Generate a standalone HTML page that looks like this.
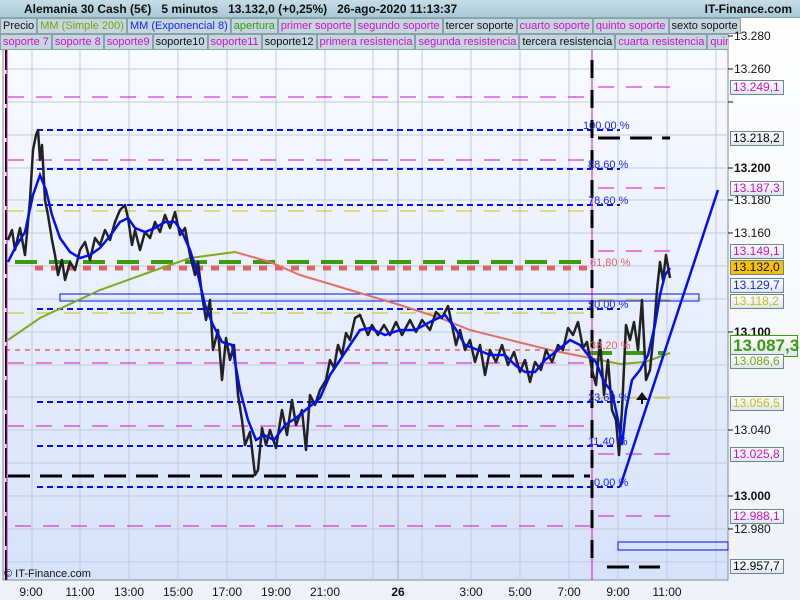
<!DOCTYPE html>
<html><head><meta charset="utf-8"><style>
*{margin:0;padding:0;box-sizing:border-box}
body{width:800px;height:600px;overflow:hidden;background:#fff;font-family:"Liberation Sans",sans-serif;position:relative}
#top{position:absolute;left:0;top:0;width:800px;height:18px;background:linear-gradient(#c6dde8,#a9c8d6);border-bottom:1px solid #8aa;font-size:12px;font-weight:bold;color:#111}
#top span{position:absolute;top:2px}
.row{position:absolute;left:0;height:16px;display:flex;font-size:11px;white-space:nowrap}
.row div{background:#c4d6de;border:1px solid #8aa0aa;padding:0 2px;line-height:14px;margin-right:0}
.m{color:#d010c8}.k{color:#111}
.ax{position:absolute;font-size:12px;color:#111;left:734px}
.bx{position:absolute;left:730px;width:54px;height:15px;border:1px solid #6d8694;background:linear-gradient(#fff,#dde6f0);font-size:12px;line-height:13px;padding-left:2px}
.tl{position:absolute;top:585px;font-size:12px;color:#111;width:40px;text-align:center}
</style></head><body>
<svg width="800" height="600" style="position:absolute;left:0;top:0">
<defs><linearGradient id="bg" x1="0" y1="0" x2="0" y2="1"><stop offset="0" stop-color="#fbfcff"/><stop offset="1" stop-color="#d6e2fb"/></linearGradient>
<linearGradient id="ab" x1="0" y1="0" x2="0" y2="1"><stop offset="0" stop-color="#fff"/><stop offset="1" stop-color="#eef2f8"/></linearGradient></defs>
<rect x="0" y="0" width="800" height="600" fill="url(#ab)"/>
<rect x="3" y="18" width="725" height="562" fill="url(#bg)" stroke="#888"/>
<g stroke="#c3cad8" stroke-width="1">
<line x1="3" x2="728" y1="36" y2="36"/><line x1="3" x2="728" y1="69" y2="69"/><line x1="3" x2="728" y1="102" y2="102"/><line x1="3" x2="728" y1="135" y2="135"/><line x1="3" x2="728" y1="168" y2="168"/><line x1="3" x2="728" y1="200" y2="200"/><line x1="3" x2="728" y1="233" y2="233"/><line x1="3" x2="728" y1="266" y2="266"/><line x1="3" x2="728" y1="299" y2="299"/><line x1="3" x2="728" y1="332" y2="332"/><line x1="3" x2="728" y1="365" y2="365"/><line x1="3" x2="728" y1="397" y2="397"/><line x1="3" x2="728" y1="430" y2="430"/><line x1="3" x2="728" y1="463" y2="463"/><line x1="3" x2="728" y1="496" y2="496"/><line x1="3" x2="728" y1="529" y2="529"/><line x1="3" x2="728" y1="562" y2="562"/>
<line x1="32" x2="32" y1="18" y2="580"/><line x1="80" x2="80" y1="18" y2="580"/><line x1="129" x2="129" y1="18" y2="580"/><line x1="178" x2="178" y1="18" y2="580"/><line x1="227" x2="227" y1="18" y2="580"/><line x1="276" x2="276" y1="18" y2="580"/><line x1="325" x2="325" y1="18" y2="580"/><line x1="373" x2="373" y1="18" y2="580"/><line x1="398" x2="398" y1="18" y2="580" stroke="#aab"/><line x1="422" x2="422" y1="18" y2="580"/><line x1="471" x2="471" y1="18" y2="580"/><line x1="520" x2="520" y1="18" y2="580"/><line x1="569" x2="569" y1="18" y2="580"/><line x1="618" x2="618" y1="18" y2="580"/><line x1="667" x2="667" y1="18" y2="580"/><line x1="716" x2="716" y1="18" y2="580"/>
</g>
<g fill="none">
<g stroke="#d010c8" stroke-width="1" stroke-dasharray="16,12">
<line x1="8" x2="585" y1="97" y2="97"/><line x1="598" x2="670" y1="87" y2="87"/><line x1="8" x2="585" y1="160" y2="160"/><line x1="598" x2="665" y1="188" y2="188"/><line x1="598" x2="670" y1="251" y2="251"/><line x1="8" x2="590" y1="363" y2="363"/><line x1="8" x2="590" y1="426" y2="426"/><line x1="598" x2="670" y1="454" y2="454"/><line x1="598" x2="670" y1="516" y2="516"/><line x1="15" x2="590" y1="526" y2="526"/>
</g>
<g stroke="#0010f0" stroke-width="2" stroke-dasharray="6,4">
<line x1="37" x2="620" y1="130" y2="130"/><line x1="37" x2="620" y1="169" y2="169"/><line x1="37" x2="620" y1="205" y2="205"/><line x1="37" x2="620" y1="309" y2="309"/><line x1="37" x2="620" y1="402" y2="402"/><line x1="37" x2="620" y1="446" y2="446"/><line x1="37" x2="620" y1="487" y2="487"/>
</g>
<g stroke="#c8c010" stroke-width="1" stroke-dasharray="16,12"><line x1="8" x2="590" y1="211" y2="211"/><line x1="8" x2="590" y1="313" y2="313"/><line x1="598" x2="670" y1="300" y2="300"/><line x1="598" x2="670" y1="398" y2="398"/></g>
<line x1="15" x2="590" y1="262" y2="262" stroke="#3c9a10" stroke-width="4" stroke-dasharray="22,12"/>
<line x1="590" x2="665" y1="353" y2="353" stroke="#3c9a10" stroke-width="4" stroke-dasharray="22,12"/>
<line x1="35" x2="590" y1="268" y2="268" stroke="#e06464" stroke-width="5" stroke-dasharray="8,8"/>
<line x1="5" x2="590" y1="350" y2="350" stroke="#e06464" stroke-width="1.5" stroke-dasharray="5,5"/>
<line x1="8" x2="590" y1="476" y2="476" stroke="#000" stroke-width="3" stroke-dasharray="22,10"/>
<line x1="598" x2="670" y1="138" y2="138" stroke="#000" stroke-width="3" stroke-dasharray="22,10"/>
<line x1="607" x2="660" y1="567" y2="567" stroke="#000" stroke-width="3" stroke-dasharray="22,10"/>
<line x1="592" x2="592" y1="18" y2="580" stroke="#d010c8" stroke-width="1"/>
<line x1="592" x2="592" y1="30" y2="570" stroke="#000" stroke-width="3" stroke-dasharray="18,12"/>
<line x1="6" x2="6" y1="40" y2="580" stroke="#000" stroke-width="2" stroke-dasharray="30,4"/>
<line x1="7" x2="7" y1="40" y2="580" stroke="#d010c8" stroke-width="1"/>
<rect x="60" y="294" width="639" height="7" stroke="#0010f0" stroke-width="1"/>
<rect x="618" y="542" width="110" height="8" stroke="#0010f0" stroke-width="1"/>
<polyline stroke="#82a820" stroke-width="2" points="8,340 40,318 100,290 150,272 190,258 235,252"/>
<polyline stroke="#e07068" stroke-width="2" points="235,252 270,262 300,275 350,290 400,305 440,318 470,330 510,340 550,350 590,358"/>
<polyline stroke="#82a820" stroke-width="2" points="590,358 620,364 645,362 670,353"/>
<polyline stroke="#222" stroke-width="2.5" stroke-linejoin="round" points="8,240 12,230 15,250 20,228 25,255 30,200 33,150 36,135 38,130 40,160 42,145 45,200 48,215 52,240 55,255 58,275 62,260 65,280 70,262 75,270 80,250 85,242 90,260 95,238 100,245 105,230 110,240 115,222 120,210 125,205 128,218 132,245 135,230 140,250 145,232 150,238 155,222 160,232 165,215 170,228 175,212 180,235 185,228 190,255 195,275 198,262 202,295 206,320 210,300 213,350 218,330 222,380 226,338 230,360 234,345 238,395 242,420 245,445 250,432 255,475 258,470 262,428 266,445 270,430 276,448 282,410 287,435 292,400 296,425 302,410 306,450 310,395 315,405 320,390 326,380 330,360 334,368 338,345 342,355 346,333 350,340 355,318 360,315 364,325 368,335 372,325 378,335 384,325 390,335 396,322 402,335 410,320 416,332 422,320 430,330 436,312 442,318 448,306 452,325 456,345 460,330 465,350 470,340 475,362 480,345 485,375 490,350 496,362 502,345 508,365 514,352 520,372 525,360 530,382 535,362 541,370 546,350 552,362 558,345 563,350 568,328 573,335 578,322 583,348 587,342 592,370 596,385 600,340 604,395 608,360 612,410 616,420 619,455 622,410 626,325 630,340 634,322 638,350 642,300 646,380 650,370 654,330 657,290 660,262 663,280 666,255 670,278"/>
<polyline stroke="#0010f0" stroke-width="2.5" points="8,262 15,248 25,232 33,195 40,175 46,190 52,215 60,238 70,252 80,258 90,255 100,248 110,236 120,222 128,218 135,228 145,232 155,228 165,222 175,222 182,232 190,250 198,275 205,305 213,325 222,342 232,345 240,390 248,420 256,440 264,435 274,440 285,425 296,418 308,408 320,398 330,375 340,360 350,345 360,330 370,328 385,335 400,330 415,330 430,322 445,315 455,328 465,345 478,350 490,355 505,355 515,365 525,372 535,372 545,360 558,350 570,340 580,345 588,355 596,362 604,382 612,392 618,420 622,445 626,410 632,380 640,370 648,355 655,325 660,295 665,275 670,268"/>
<line x1="620" y1="487" x2="718" y2="190" stroke="#0010f0" stroke-width="2.5"/>
</g>
<g font-family="Liberation Sans" font-size="11" fill="#1a28e8">
<text x="583" y="129">100,00 %</text><text x="588" y="168">88,60 %</text><text x="588" y="204">78,60 %</text><text x="590" y="266" fill="#e06464">61,80 %</text><text x="588" y="308">50,00 %</text><text x="590" y="349" fill="#e06464">38,20 %</text><text x="588" y="401">23,60 %</text><text x="588" y="445">11,40 %</text><text x="594" y="486">0,00 %</text>
</g>
<path d="M641,400 l-5,0 l6,-8 l6,8 l-5,0 l0,4 l-2,0 z" fill="#111"/>
<g stroke="#111"><line x1="728" y1="36" x2="733" y2="36"/><line x1="728" y1="69" x2="733" y2="69"/><line x1="728" y1="102" x2="733" y2="102"/><line x1="728" y1="168" x2="733" y2="168"/><line x1="728" y1="200" x2="733" y2="200"/><line x1="728" y1="233" x2="733" y2="233"/><line x1="728" y1="332" x2="733" y2="332"/><line x1="728" y1="430" x2="733" y2="430"/><line x1="728" y1="496" x2="733" y2="496"/><line x1="728" y1="529" x2="733" y2="529"/></g>
<rect x="5" y="6" width="5" height="9" fill="#e06464" stroke="#333"/><rect x="11" y="2" width="5" height="10" fill="#5c5" stroke="#333"/>
</svg>
<div id="top"><span style="left:24px">Alemania 30 Cash (5€)&nbsp;&nbsp;&nbsp;5 minutos&nbsp;&nbsp;&nbsp;13.132,0 (+0,25%)&nbsp;&nbsp;&nbsp;26-ago-2020 11:13:37</span><span style="right:8px">IT-Finance.com</span></div>
<div class="row" style="top:18px"><div class="k">Precio</div><div style="color:#82a010">MM (Simple 200)</div><div style="color:#1a28e8">MM (Exponencial 8)</div><div style="color:#3c9a10">apertura</div><div class="m">primer soporte</div><div class="m">segundo soporte</div><div class="k">tercer soporte</div><div class="m">cuarto soporte</div><div class="m">quinto soporte</div><div class="k">sexto soporte</div></div>
<div class="row" style="top:34px;width:728px;overflow:hidden"><div class="m">soporte 7</div><div class="m">soporte 8</div><div class="m">soporte9</div><div class="k">soporte10</div><div class="m">soporte11</div><div class="k">soporte12</div><div class="m">primera resistencia</div><div class="m">segunda resistencia</div><div class="k">tercera resistencia</div><div class="m">cuarta resistencia</div><div class="m">quinta resistencia</div></div>
<div class="ax" style="top:29px">13.280</div><div class="ax" style="top:62px">13.260</div><div class="ax" style="top:161px;font-weight:bold">13.200</div><div class="ax" style="top:193px">13.180</div><div class="ax" style="top:226px">13.160</div><div class="ax" style="top:325px;font-weight:bold">13.100</div><div class="ax" style="top:423px">13.040</div><div class="ax" style="top:489px;font-weight:bold">13.000</div><div class="ax" style="top:522px">12.980</div>
<div class="bx" style="top:80px;color:#d010c8">13.249,1</div>
<div class="bx" style="top:131px">13.218,2</div>
<div class="bx" style="top:181px;color:#d010c8">13.187,3</div>
<div class="bx" style="top:244px;color:#d010c8">13.149,1</div>
<div class="bx" style="top:260px;background:#f8c000;color:#111">13.132,0</div>
<div class="bx" style="top:278px;color:#1a28e8">13.129,7</div>
<div class="bx" style="top:294px;color:#c8c010">13.118,2</div>
<div class="bx" style="top:335px;width:68px;height:22px;font-size:17px;line-height:20px;font-weight:bold;color:#3c9a10;border-color:#3c9a10">13.087,3</div>
<div class="bx" style="top:354px;color:#82a010">13.086,6</div>
<div class="bx" style="top:396px;color:#c8c010">13.056,5</div>
<div class="bx" style="top:447px;color:#d010c8">13.025,8</div>
<div class="bx" style="top:509px;color:#d010c8">12.988,1</div>
<div class="bx" style="top:559px">12.957,7</div>
<div style="position:absolute;left:4px;top:568px;font-size:11px;color:#111">© IT-Finance.com</div>
<div class="tl" style="left:11px">9:00</div><div class="tl" style="left:60px">11:00</div><div class="tl" style="left:109px">13:00</div><div class="tl" style="left:158px">15:00</div><div class="tl" style="left:207px">17:00</div><div class="tl" style="left:256px">19:00</div><div class="tl" style="left:305px">21:00</div><div class="tl" style="left:378px;font-weight:bold">26</div><div class="tl" style="left:451px">3:00</div><div class="tl" style="left:500px">5:00</div><div class="tl" style="left:549px">7:00</div><div class="tl" style="left:598px">9:00</div><div class="tl" style="left:647px">11:00</div>
</body></html>
